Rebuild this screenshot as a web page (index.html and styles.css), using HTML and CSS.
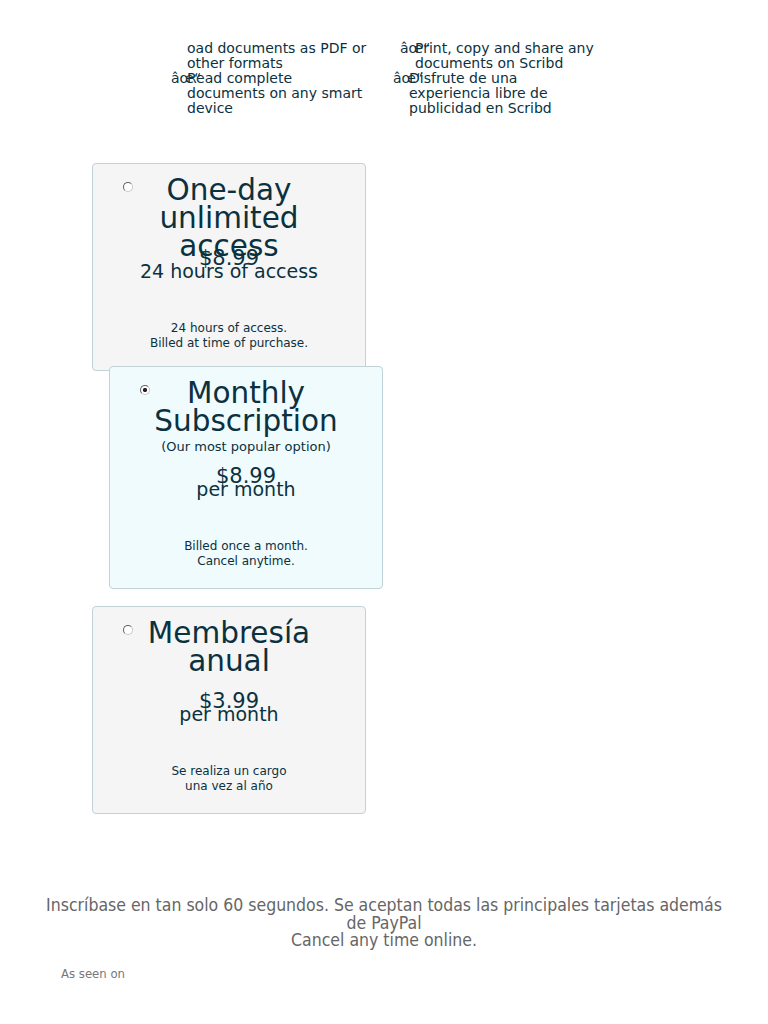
FILE: index.html
```html
<!DOCTYPE html>
<html lang="es">
<head>
<meta charset="utf-8">
<title>Scribd plans</title>
<link rel="stylesheet" href="styles.css">
</head>
<body>
<div class="features">
  <ul class="col col-left">
    <li class="item">oad documents as PDF or other formats</li>
    <li class="item"><span class="check">âœ“</span>Read complete documents on any smart device</li>
  </ul>
  <ul class="col col-right">
    <li class="item item-indent"><span class="check">âœ“</span>Print, copy and share any documents on Scribd</li>
    <li class="item"><span class="check">âœ“</span>Disfrute de una experiencia libre de publicidad en Scribd</li>
  </ul>
</div>

<div class="cards">
  <label class="card">
    <input class="radio" type="radio" name="plan">
    <div class="head">
      <div class="title">One-day unlimited access</div>
    </div>
    <div class="price">$8.99</div>
    <div class="period">24 hours of access</div>
    <div class="desc">24 hours of access.<br>Billed at time of purchase.</div>
  </label>
  <label class="card card-popular">
    <input class="radio" type="radio" name="plan" checked>
    <div class="head">
      <div class="title">Monthly Subscription</div>
      <div class="note">(Our most popular option)</div>
    </div>
    <div class="price">$8.99</div>
    <div class="period">per month</div>
    <div class="desc">Billed once a month.<br>Cancel anytime.</div>
  </label>
  <label class="card card-annual">
    <input class="radio" type="radio" name="plan">
    <div class="head">
      <div class="title">Membresía anual</div>
    </div>
    <div class="price">$3.99</div>
    <div class="period">per month</div>
    <div class="desc">Se realiza un cargo<br>una vez al año</div>
  </label>
</div>

<div class="signup">
  <p class="signup-text">Inscríbase en tan solo 60 segundos. Se aceptan todas las principales tarjetas además de PayPal<br>Cancel any time online.</p>
</div>
<div class="seen">As seen on</div>
</body>
</html>
```

FILE: styles.css
```css
html, body {
  margin: 0;
  padding: 0;
  background: #ffffff;
}
body {
  font-family: "DejaVu Sans", Verdana, sans-serif;
  color: #0b3140;
}
.features {
  display: flex;
  padding: 41px 0 0 187px;
}
.col {
  list-style: none;
  margin: 0;
  padding: 0;
  font-size: 14px;
  line-height: 15px;
}
.col-left {
  width: 182px;
}
.col-right {
  width: 188px;
  margin-left: 40px;
}
.item {
  position: relative;
}
.item-indent {
  padding-left: 6px;
}
.check {
  position: absolute;
  left: -16px;
  top: 0;
}
.item-indent .check {
  left: -9px;
}
.cards {
  display: flex;
  flex-direction: column;
  align-items: flex-start;
  padding-left: 92px;
  margin-top: 47px;
}
.card {
  position: relative;
  display: block;
  box-sizing: border-box;
  width: 274px;
  height: 208px;
  padding: 12px 20px 0;
  background: #f5f5f5;
  border: 1px solid #c1d2d8;
  border-radius: 4px;
  text-align: center;
}
.card-popular {
  margin-left: 17px;
  margin-top: -5px;
  height: 223px;
  background: #f0fbfd;
}
.card-annual {
  margin-top: 17px;
}
.radio {
  position: absolute;
  left: 30px;
  top: 18px;
  margin: 0;
  appearance: none;
  -webkit-appearance: none;
  box-sizing: border-box;
  width: 10px;
  height: 10px;
  border: 1px solid;
  border-color: #5f5f5f #c8c8c8 #c8c8c8 #5f5f5f;
  border-radius: 50%;
  background: #fff;
}
.radio:checked {
  background: radial-gradient(circle, #222 0 1.8px, #fff 2.4px);
}
.head {
  height: 70px;
}
.card-popular .head {
  height: 85px;
}
.title {
  font-size: 29.5px;
  line-height: 28px;
}
.note {
  font-size: 13px;
  line-height: 16px;
  margin-top: 4px;
}
.price {
  font-size: 21px;
  line-height: 24px;
}
.period {
  font-size: 19px;
  line-height: 22px;
  margin-top: -10px;
}
.desc {
  font-size: 12px;
  line-height: 15px;
  margin-top: 39px;
}
.signup {
  margin-top: 83px;
  padding: 0 40px;
}
.signup-text {
  margin: 0;
  text-align: center;
  font-family: "DejaVu Sans Condensed", "DejaVu Sans", sans-serif;
  font-stretch: condensed;
  font-size: 17.5px;
  line-height: 17.5px;
  color: #666666;
}
.seen {
  margin: 17px 0 0 61px;
  font-family: "DejaVu Sans Condensed", "DejaVu Sans", sans-serif;
  font-stretch: condensed;
  font-size: 13px;
  line-height: 14px;
  color: #777777;
}
```
